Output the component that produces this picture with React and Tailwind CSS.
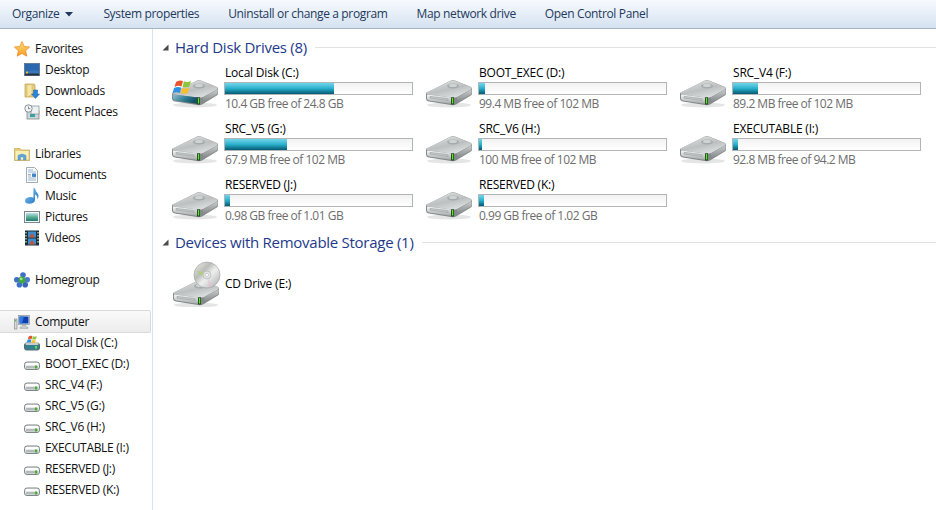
import React from "react";

const toolbarItems = ["System properties", "Uninstall or change a program", "Map network drive", "Open Control Panel"];

const hardDrives = [
  { name: "Local Disk (C:)", free: "10.4 GB free of 24.8 GB", used: 109, system: true },
  { name: "BOOT_EXEC (D:)", free: "99.4 MB free of 102 MB", used: 6 },
  { name: "SRC_V4 (F:)", free: "89.2 MB free of 102 MB", used: 25 },
  { name: "SRC_V5 (G:)", free: "67.9 MB free of 102 MB", used: 62 },
  { name: "SRC_V6 (H:)", free: "100 MB free of 102 MB", used: 3 },
  { name: "EXECUTABLE (I:)", free: "92.8 MB free of 94.2 MB", used: 5 },
  { name: "RESERVED (J:)", free: "0.98 GB free of 1.01 GB", used: 5 },
  { name: "RESERVED (K:)", free: "0.99 GB free of 1.02 GB", used: 5 },
];

const WinFlag = ({ x, y, s = 1 }) => (
  <g transform={`translate(${x} ${y}) scale(${s})`}>
    <path d="M1 3 Q4 0.5 8 2 L6.5 7.5 Q3.5 6 -0.5 8 Z" fill="#e8532b" />
    <path d="M9 2.3 Q12 4 16 2 L14.5 7.5 Q11 9 7.5 7.8 Z" fill="#8cc63e" />
    <path d="M-1 9 Q3 7 6.2 8.6 L4.8 14 Q1.5 12.5 -2.5 14.5 Z" fill="#2f8fe0" />
    <path d="M7.2 9 Q11 10.2 14.2 8.6 L12.8 14 Q9 15.5 5.8 14 Z" fill="#f6c02c" />
  </g>
);

// big drive, 48x28 box
const DriveBody = ({ system }) => (
  <>
    <defs>
      <linearGradient id="driveTop" x1="0" y1="0" x2="0.6" y2="1">
        <stop offset="0" stopColor="#e6e8e8" />
        <stop offset="0.6" stopColor="#bcc0c0" />
        <stop offset="1" stopColor="#dcdfdf" />
      </linearGradient>
      <linearGradient id="driveFront" x1="0" y1="0" x2="0" y2="1">
        <stop offset="0" stopColor="#f7f8f8" />
        <stop offset="1" stopColor="#a3a8a8" />
      </linearGradient>
      <linearGradient id="driveSide" x1="0" y1="0" x2="0" y2="1">
        <stop offset="0" stopColor="#c8cbcb" />
        <stop offset="1" stopColor="#7d8282" />
      </linearGradient>
      <linearGradient id="driveSys" x1="0" y1="0" x2="1" y2="0.4">
        <stop offset="0" stopColor="#8fbccb" />
        <stop offset="0.6" stopColor="#2a7a92" />
        <stop offset="1" stopColor="#174f63" />
      </linearGradient>
    </defs>
    <ellipse cx="24" cy="26" rx="22" ry="2.5" fill="#000" opacity="0.1" />
    <path d="M1 14 L26 1.5 Q28 1 30 1.6 L46 8 Q47.5 9 47 11 L47 15 Q47 16 45 17 L31 25.5 Q29 26.5 26 26 L4 22.5 Q1.5 22 1 20 Z" fill="#84898a" />
    <path d="M1.5 13.5 L26 1.8 Q28 1.2 30 1.8 L46 8 Q47.5 9.2 46 10.5 L32 18 Q30 18.8 27 18.4 L3 15.5 Q0.8 15 1.5 13.5 Z" fill="url(#driveTop)" />
    <ellipse cx="28" cy="7" rx="6" ry="2.6" fill="#9a9f9f" opacity="0.7" />
    <ellipse cx="28" cy="6.4" rx="4" ry="1.6" fill="#d0d3d3" />
    <path d="M2 15.5 L27 18.6 L27 25 L4 21.6 Q2.2 21 2 19.5 Z" fill={system ? "url(#driveSys)" : "url(#driveFront)"} />
    {!system && <path d="M5 17.4 L23 19.7 L23 21.4 L5 19.1 Z" fill="#c9cccc" stroke="#8d9292" strokeWidth="0.5" />}
    <path d="M32 18.2 L46.6 10.6 L46.6 15 L32 24 Z" fill="url(#driveSide)" />
    <rect x="26" y="18.4" width="3" height="7" fill="#16340f" />
    <rect x="26.8" y="19" width="1.5" height="5.6" fill="#5fe03a" />
  </>
);

const BigDrive = ({ system }) => (
  <svg width="50" height="30" viewBox="0 0 50 30" className="mt-[14px]">
    <DriveBody system={system} />
    {system && <WinFlag x={4} y={0} s={1} />}
  </svg>
);

const CdDrive = () => (
  <svg width="50" height="46" viewBox="0 0 50 46">
    <defs>
      <linearGradient id="cdDisc" x1="0" y1="0" x2="1" y2="1">
        <stop offset="0" stopColor="#f0f0f0" />
        <stop offset="0.35" stopColor="#b9bdb6" />
        <stop offset="0.55" stopColor="#eef0ee" />
        <stop offset="1" stopColor="#a6aaae" />
      </linearGradient>
    </defs>
    <g transform="translate(1 18)">
      <DriveBody />
    </g>
    <circle cx="36" cy="14" r="13" fill="url(#cdDisc)" stroke="#9a9e9e" strokeWidth="0.6" />
    <path d="M25 9 L32 12 L31 15 Z" fill="#a4d65e" opacity="0.8" />
    <path d="M38 27 L37 17 L41 24 Z" fill="#f0b7d0" opacity="0.5" />
    <circle cx="36" cy="14" r="4" fill="#e2e4e4" stroke="#a0a4a4" strokeWidth="0.5" />
    <circle cx="36" cy="14" r="1.6" fill="#fff" stroke="#a0a4a4" strokeWidth="0.4" />
  </svg>
);

const SmallDrive = () => (
  <svg width="16" height="16" viewBox="0 0 16 16">
    <rect x="0.5" y="6" width="15" height="7.5" rx="2.5" fill="#e8eaea" stroke="#7d8689" />
    <path d="M2 7 H14 V9 H2 Z" fill="#fff" />
    <rect x="2" y="10" width="12" height="2.5" fill="#b4babc" />
    <rect x="11" y="9.5" width="2" height="3" fill="#3fb424" />
  </svg>
);

const SmallSystemDrive = () => (
  <svg width="16" height="16" viewBox="0 0 16 16">
    <rect x="0.5" y="8" width="15" height="7" rx="2" fill="#35808f" stroke="#5a6a70" />
    <rect x="1.5" y="7" width="13" height="3" rx="1" fill="#c8cccc" />
    <rect x="11" y="11" width="2" height="2.5" fill="#5fe03a" />
    <WinFlag x={4} y={0} s={0.55} />
  </svg>
);

const Star = () => (
  <svg width="16" height="16" viewBox="0 0 16 16">
    <defs>
      <linearGradient id="starFill" x1="0" y1="0" x2="0" y2="1">
        <stop offset="0" stopColor="#ffe27a" />
        <stop offset="1" stopColor="#fb9a24" />
      </linearGradient>
    </defs>
    <path d="M8 0.6 L10.2 5.5 L15.6 6 L11.6 9.7 L12.8 15.2 L8 12.4 L3.2 15.2 L4.4 9.7 L0.4 6 L5.8 5.5 Z" fill="url(#starFill)" stroke="#ee8a2a" strokeWidth="0.8" strokeLinejoin="round" />
  </svg>
);

const Desktop = () => (
  <svg width="16" height="16" viewBox="0 0 16 16">
    <rect x="0.5" y="1.5" width="15" height="12" fill="#3a78bd" stroke="#5f7c99" />
    <path d="M1 2 H15 V9 Q7 7 1 11 Z" fill="#2c68ad" />
    <rect x="1" y="11.5" width="14" height="2" fill="#2a3038" />
    <rect x="2" y="9.5" width="2" height="2" fill="#e9b83a" />
  </svg>
);

const Downloads = () => (
  <svg width="16" height="16" viewBox="0 0 16 16">
    <path d="M1 1 H10 L11 2 V14 H1 Z" fill="#e8cf7e" stroke="#b89b4c" strokeWidth="0.7" />
    <path d="M3 2 L8 1.5 V12 L3 14 Z" fill="#f6e6a6" stroke="#c9ad5d" strokeWidth="0.5" />
    <path d="M9.5 7 H13.5 V11 H15.5 L11.5 15.5 L7.5 11 H9.5 Z" fill="#2a85d8" stroke="#1a5fa8" strokeWidth="0.5" />
  </svg>
);

const Recent = () => (
  <svg width="16" height="16" viewBox="0 0 16 16">
    <rect x="3" y="7" width="12" height="8" fill="#cfd5d8" stroke="#7d8a90" strokeWidth="0.8" />
    <rect x="7" y="2" width="8" height="8" fill="#eef1f2" stroke="#8b979c" strokeWidth="0.8" />
    <rect x="6" y="10" width="5" height="3" fill="#3f9ea0" />
    <circle cx="4.5" cy="4.5" r="3.7" fill="#f4f6f6" stroke="#7b878c" strokeWidth="0.9" />
    <path d="M4.5 2.5 V4.7 H6.3" stroke="#556" strokeWidth="0.7" fill="none" />
  </svg>
);

const LibraryFolder = () => (
  <svg width="16" height="16" viewBox="0 0 16 16">
    <path d="M0.5 2.5 H6 L7.5 4 H15.5 V14.5 H0.5 Z" fill="#e6cd78" stroke="#c2a450" strokeWidth="0.7" />
    <path d="M1.5 5 H14.5 V13.5 H1.5 Z" fill="#f8eeb8" />
    <path d="M4 14 V9.5 Q8 6.5 12 9.5 V14 H9.5 V11 H6.5 V14 Z" fill="#5ea8dc" stroke="#3b82bb" strokeWidth="0.4" />
  </svg>
);

const Documents = () => (
  <svg width="16" height="16" viewBox="0 0 16 16">
    <path d="M2.5 0.5 H10.5 L13.5 3.5 V15.5 H2.5 Z" fill="#fdfdfd" stroke="#8a97a3" strokeWidth="0.8" />
    <path d="M4 3 H9 M4 5 H12 M4 11 H12 M4 13 H12" stroke="#7aa1c4" strokeWidth="0.8" />
    <rect x="8" y="6.5" width="4" height="3.4" fill="#3f86c4" />
    <path d="M4 7.5 H7 M4 9 H7" stroke="#7aa1c4" strokeWidth="0.8" />
  </svg>
);

const Music = () => (
  <svg width="16" height="16" viewBox="0 0 16 16">
    <defs>
      <linearGradient id="noteFill" x1="0" y1="0" x2="1" y2="1">
        <stop offset="0" stopColor="#8ccbf4" />
        <stop offset="1" stopColor="#1a6fc0" />
      </linearGradient>
    </defs>
    <path d="M9.4 0.2 H11 Q11.4 3 13.4 5 Q15.6 7.8 13.4 11.4 Q13.8 7.6 11 6.6 V12 Q10.6 15.8 5 15.8 Q1 15.8 1 12.8 Q1.2 9.4 6 9 Q8.4 8.8 9.4 9.8 Z" fill="url(#noteFill)" />
  </svg>
);

const Pictures = () => (
  <svg width="16" height="16" viewBox="0 0 16 16">
    <defs>
      <linearGradient id="picFill" x1="0" y1="0" x2="0" y2="1">
        <stop offset="0" stopColor="#bfe0f0" />
        <stop offset="0.5" stopColor="#5bb08f" />
        <stop offset="1" stopColor="#1f7a7a" />
      </linearGradient>
    </defs>
    <rect x="0.5" y="2.5" width="15" height="11" fill="#f6f7f7" stroke="#7d8589" />
    <rect x="2" y="4" width="12" height="8" fill="url(#picFill)" />
  </svg>
);

const Videos = () => (
  <svg width="16" height="16" viewBox="0 0 16 16">
    <rect x="1" y="0.5" width="14" height="15" fill="#1e2f33" />
    <rect x="4" y="1.5" width="8" height="6" fill="#3b8fd0" />
    <rect x="4" y="8.5" width="8" height="6" fill="#3b8fd0" />
    <path d="M5 7.5 L8 3 L11 7.5 Z M5 14.5 L8 10 L11 14.5 Z" fill="#c5502f" />
    <path d="M2 2 V3.5 M2 5 V6.5 M2 8 V9.5 M2 11 V12.5 M14 2 V3.5 M14 5 V6.5 M14 8 V9.5 M14 11 V12.5" stroke="#d8e0e0" strokeWidth="1.2" />
  </svg>
);

const Homegroup = () => (
  <svg width="16" height="16" viewBox="0 0 16 16">
    <circle cx="9" cy="3" r="2.8" fill="#3f6fc8" />
    <circle cx="2.8" cy="7.8" r="2.8" fill="#3f6fc8" />
    <circle cx="13.2" cy="7.8" r="2.8" fill="#4a7ad0" />
    <circle cx="5.4" cy="12.8" r="2.8" fill="#3f6fc8" />
    <circle cx="11.2" cy="12.8" r="2.8" fill="#3a64b8" />
    <circle cx="8" cy="8" r="3.4" fill="#3aa83a" />
    <circle cx="7.2" cy="7" r="1.4" fill="#a6e08e" />
  </svg>
);

const ComputerIcon = () => (
  <svg width="16" height="16" viewBox="0 0 16 16">
    <rect x="0.5" y="5" width="2.5" height="10" fill="#d8dcdc" stroke="#77807f" strokeWidth="0.6" />
    <rect x="1.2" y="6" width="1" height="1.5" fill="#3fb424" />
    <rect x="4.5" y="1.5" width="11" height="9" fill="#dfe3e6" stroke="#85919c" strokeWidth="0.7" />
    <rect x="5.5" y="2.5" width="9" height="7" fill="#0e3fb0" />
    <path d="M5.5 2.5 H10 L8 9.5 H5.5 Z" fill="#2f7ae0" />
    <path d="M8.5 11 H11.5 L12.5 13 H14 V14.5 H6 V13 H7.5 Z" fill="#c5cacc" stroke="#8b9498" strokeWidth="0.4" />
  </svg>
);

const favorites = [
  { label: "Desktop", icon: <Desktop /> },
  { label: "Downloads", icon: <Downloads /> },
  { label: "Recent Places", icon: <Recent /> },
];

const libraries = [
  { label: "Documents", icon: <Documents /> },
  { label: "Music", icon: <Music /> },
  { label: "Pictures", icon: <Pictures /> },
  { label: "Videos", icon: <Videos /> },
];

const computerDrives = [
  { label: "Local Disk (C:)", icon: <SmallSystemDrive /> },
  { label: "BOOT_EXEC (D:)", icon: <SmallDrive /> },
  { label: "SRC_V4 (F:)", icon: <SmallDrive /> },
  { label: "SRC_V5 (G:)", icon: <SmallDrive /> },
  { label: "SRC_V6 (H:)", icon: <SmallDrive /> },
  { label: "EXECUTABLE (I:)", icon: <SmallDrive /> },
  { label: "RESERVED (J:)", icon: <SmallDrive /> },
  { label: "RESERVED (K:)", icon: <SmallDrive /> },
];

const NavRoot = ({ icon, label, selected }) => (
  <div className={`flex h-[21px] items-center gap-[5px] pl-[14px] ${selected ? "-my-px box-content w-[136px] rounded-r-[2px] border-y border-r border-[#dadada] bg-gradient-to-b from-[#fafafa] to-[#ececec]" : ""}`}>
    {icon}
    <span className="whitespace-nowrap">{label}</span>
  </div>
);

const NavItem = ({ icon, label }) => (
  <div className="flex h-[21px] items-center gap-[5px] pl-[24px]">
    {icon}
    <span className="whitespace-nowrap">{label}</span>
  </div>
);

const GroupHeader = ({ title, className = "" }) => (
  <div className={`flex h-[20px] items-center pl-[9px] ${className}`}>
    <svg width="7" height="7" viewBox="0 0 7 7" className="mr-[6px]">
      <path d="M6.5 0.5 V6.5 H0.5 Z" fill="#4a4a4a" />
    </svg>
    <span className="whitespace-nowrap text-[15px] tracking-[-0.27px] text-[#1e3a8a]">{title}</span>
    <div className="ml-2 h-px flex-1 bg-[#e2e2e2]" />
  </div>
);

const DriveTile = ({ drive }) => (
  <div className="flex h-[56px]">
    <div className="w-[53px] shrink-0">
      <BigDrive system={drive.system} />
    </div>
    <div className="w-[189px]">
      <div className="h-[17px] pl-px leading-[16px] tracking-[-0.2px] text-black">{drive.name}</div>
      <div className="h-[13px] border border-[#b2b5b5] bg-gradient-to-b from-[#f2f2f2] to-[#ffffff]">
        <div
          className="h-full bg-gradient-to-b from-[#6ed6ea] via-[#29afcb] to-[#045a74]"
          style={{ width: drive.used }}
        />
      </div>
      <div className="pl-px leading-[17px] tracking-[-0.5px] text-[#6d6d6d]">{drive.free}</div>
    </div>
  </div>
);

export default function App() {
  return (
    <div className="flex h-[510px] w-[936px] flex-col overflow-hidden bg-white font-['Open_Sans','Noto_Sans',sans-serif] text-[12px] tracking-[-0.3px] text-[#111]">
      <div className="flex h-[29px] shrink-0 items-center gap-[29px] border-b border-[#a4b3c6] bg-gradient-to-b from-[#f7fafe] via-[#e6eef8] to-[#d5e2f0] pl-[12px] tracking-[-0.35px] text-[#1e395b]">
        <div className="flex items-center gap-[6px] pr-px">
          <span>Organize</span>
          <svg width="8" height="5" viewBox="0 0 8 5">
            <path d="M0 0 H8 L4 4.5 Z" fill="#1e395b" />
          </svg>
        </div>
        {toolbarItems.map((label) => (
          <span key={label} className="whitespace-nowrap">
            {label}
          </span>
        ))}
      </div>

      <div className="flex min-h-0 flex-1">
        <aside className="w-[153px] shrink-0 border-r border-[#d6e3f1] pt-[9px]">
          <NavRoot icon={<Star />} label="Favorites" />
          {favorites.map((item) => (
            <NavItem key={item.label} {...item} />
          ))}
          <div className="mt-[21px]">
            <NavRoot icon={<LibraryFolder />} label="Libraries" />
            {libraries.map((item) => (
              <NavItem key={item.label} {...item} />
            ))}
          </div>
          <div className="mt-[21px]">
            <NavRoot icon={<Homegroup />} label="Homegroup" />
          </div>
          <div className="mt-[21px]">
            <NavRoot icon={<ComputerIcon />} label="Computer" selected />
            {computerDrives.map((item) => (
              <NavItem key={item.label} {...item} />
            ))}
          </div>
        </aside>

        <main className="min-w-0 flex-1 pt-[8px]">
          <GroupHeader title="Hard Disk Drives (8)" />
          <div className="mt-[8px] grid grid-cols-[254px_254px_254px] pl-[18px]">
            {hardDrives.map((drive) => (
              <DriveTile key={drive.name} drive={drive} />
            ))}
          </div>
          <GroupHeader title="Devices with Removable Storage (1)" className="-mt-px" />
          <div className="mt-[9px] flex h-[46px] items-center pl-[18px]">
            <div className="w-[53px] shrink-0">
              <CdDrive />
            </div>
            <span className="pl-px tracking-[-0.2px] text-black">CD Drive (E:)</span>
          </div>
        </main>
      </div>
    </div>
  );
}
